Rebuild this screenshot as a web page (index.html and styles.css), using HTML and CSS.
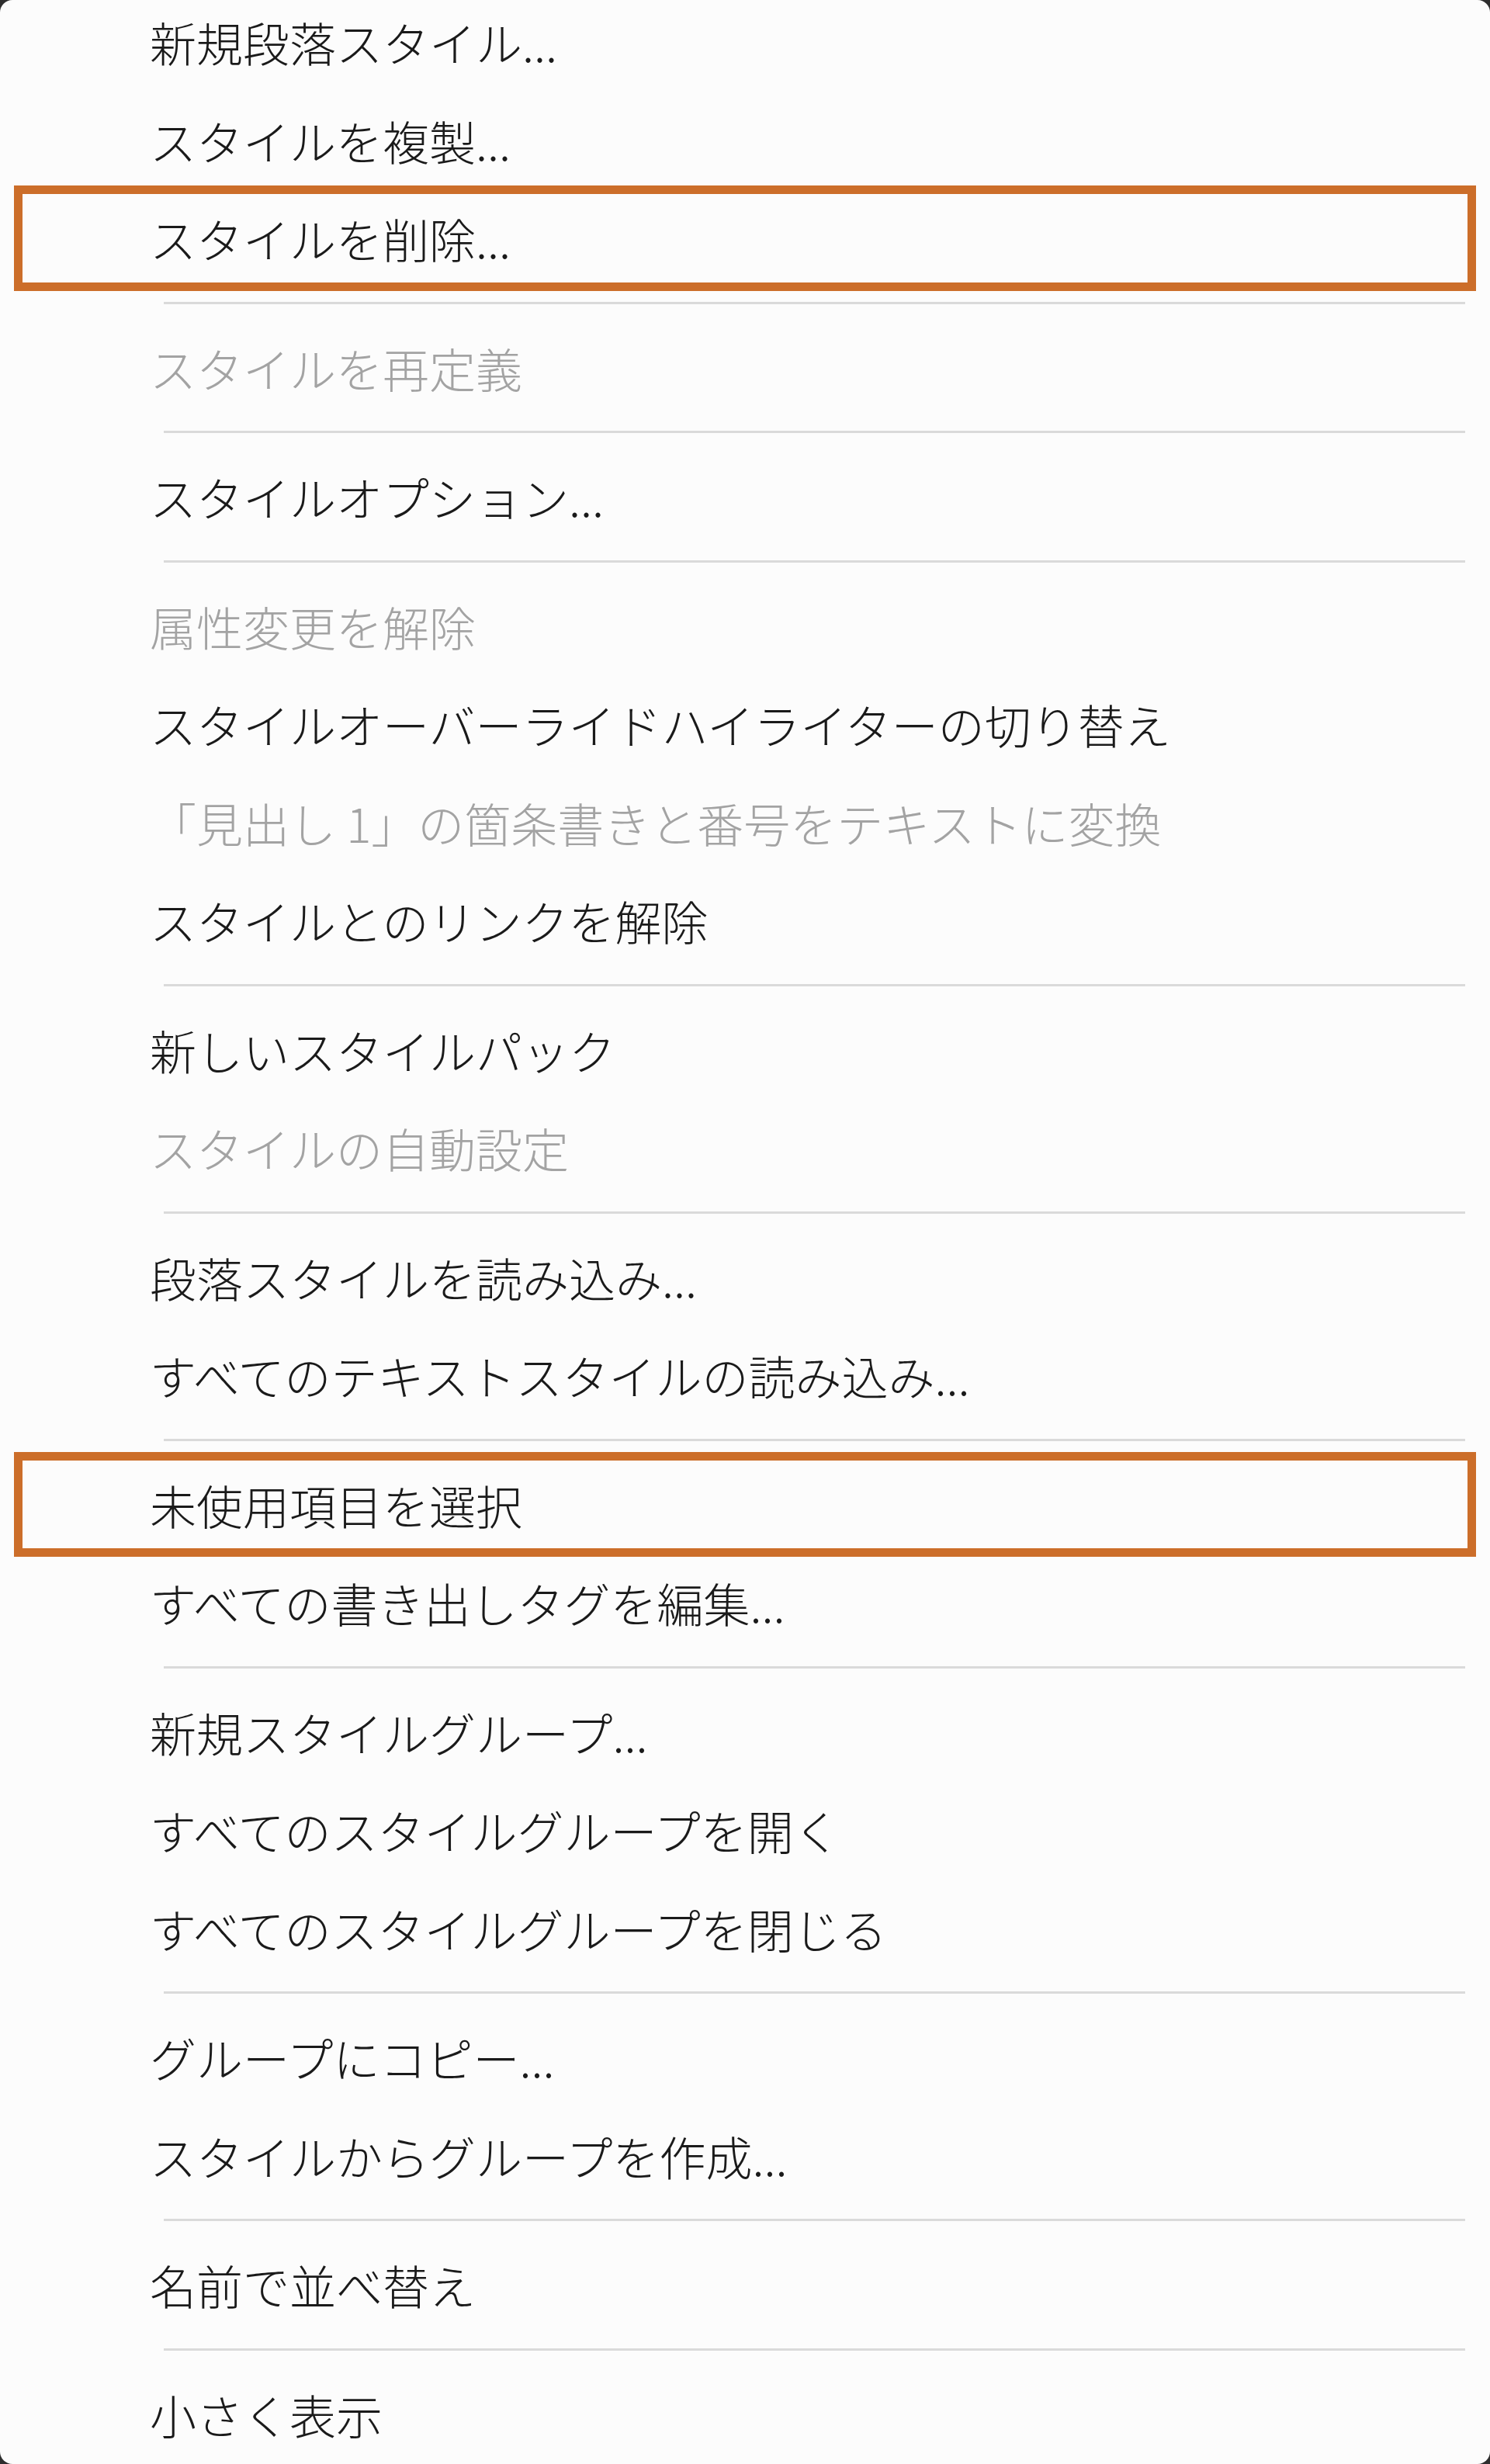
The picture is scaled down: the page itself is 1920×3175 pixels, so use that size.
FILE: index.html
```html
<!DOCTYPE html>
<html lang="ja">
<head>
<meta charset="utf-8">
<title>段落スタイル メニュー</title>
<link rel="stylesheet" href="styles.css">
</head>
<body>
<div class="menu">
  <ul class="list">
    <li class="item">新規段落スタイル...</li>
    <li class="item">スタイルを複製...</li>
    <li class="item marked">スタイルを削除...</li>
    <li class="sep"></li>
    <li class="item disabled">スタイルを再定義</li>
    <li class="sep"></li>
    <li class="item">スタイルオプション...</li>
    <li class="sep"></li>
    <li class="item disabled">属性変更を解除</li>
    <li class="item">スタイルオーバーライドハイライターの切り替え</li>
    <li class="item disabled">「見出し 1」の箇条書きと番号をテキストに変換</li>
    <li class="item">スタイルとのリンクを解除</li>
    <li class="sep"></li>
    <li class="item">新しいスタイルパック</li>
    <li class="item disabled">スタイルの自動設定</li>
    <li class="sep"></li>
    <li class="item">段落スタイルを読み込み...</li>
    <li class="item">すべてのテキストスタイルの読み込み...</li>
    <li class="sep"></li>
    <li class="item marked">未使用項目を選択</li>
    <li class="item">すべての書き出しタグを編集...</li>
    <li class="sep"></li>
    <li class="item">新規スタイルグループ...</li>
    <li class="item">すべてのスタイルグループを開く</li>
    <li class="item">すべてのスタイルグループを閉じる</li>
    <li class="sep"></li>
    <li class="item">グループにコピー...</li>
    <li class="item">スタイルからグループを作成...</li>
    <li class="sep"></li>
    <li class="item">名前で並べ替え</li>
    <li class="sep"></li>
    <li class="item">小さく表示</li>
  </ul>
</div>
</body>
</html>
```

FILE: styles.css
```css
html, body {
  margin: 0;
  padding: 0;
}

body {
  background: #2e2e2e;
  font-family: "Noto Sans CJK JP", "Noto Sans", sans-serif;
}

.menu {
  background: #fcfcfc;
  border-radius: 16px;
  height: 3175px;
  overflow: hidden;
}

.list {
  list-style: none;
  margin: -9px 0 0 0;
  padding: 0;
}

.item {
  position: relative;
  height: 126.5px;
  display: flex;
  align-items: center;
  padding-left: 193px;
  font-size: 60px;
  font-weight: 300;
  line-height: 1;
  color: #1a1a1a;
  white-space: nowrap;
}

.item.disabled {
  color: #a3a3a3;
}

.item.marked::after {
  content: "";
  position: absolute;
  top: -5px;
  bottom: -4px;
  left: 18px;
  right: 18px;
  border: 11px solid #cc6e2a;
}

.sep {
  padding: 18px 32px 19px 211px;
}

.sep::before {
  content: "";
  display: block;
  height: 3px;
  background: #dadada;
}
```
